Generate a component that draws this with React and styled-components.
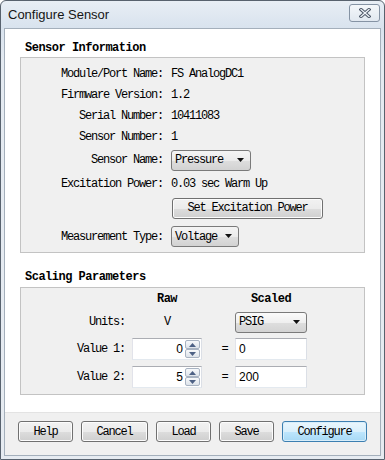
import React from 'react'
import styled, { createGlobalStyle } from 'styled-components'

const Global = createGlobalStyle`
  html, body { margin: 0; padding: 0; background: #fff; }
  * { box-sizing: border-box; }
`

const mono = `"Liberation Mono", "DejaVu Sans Mono", monospace`

const Frame = styled.div`
  width: 385px;
  height: 460px;
  border: 1px solid #58626e;
  border-radius: 6px 6px 0 0;
  background: linear-gradient(#e8eef5, #d9e3ee 26px, #e4eaf1 60px, #e6ebf1);
  display: flex;
  flex-direction: column;
  overflow: hidden;
`

const TitleBar = styled.div`
  height: 26px;
  flex: none;
  display: flex;
  align-items: center;
  justify-content: space-between;
  padding: 0 4px 0 7px;
  font-family: "Liberation Sans", Arial, sans-serif;
  font-size: 13px;
  color: #151515;
`

const CloseBtn = styled.div`
  width: 31px;
  height: 18px;
  margin-top: -3px;
  border: 1px solid #8593a4;
  border-radius: 3px;
  background: linear-gradient(#f4f7fa, #e1e8f0);
  display: flex;
  align-items: center;
  justify-content: center;
`

const Client = styled.div`
  flex: 1;
  margin: 1px 3px 3px;
  border: 1px solid #a4afbb;
  background: #fff;
  display: flex;
  flex-direction: column;
`

const Body = styled.div`
  flex: 1;
  padding: 11px 15px 0;
  font-family: ${mono};
  font-size: 12px;
  letter-spacing: -1.2px;
  color: #000;
`

const GroupTitle = styled.div`
  height: 16px;
  line-height: 16px;
  font-weight: bold;
  letter-spacing: -0.5px;
  margin: ${p => p.$top || 0}px 0 ${p => p.$bottom || 1}px 5px;
`

const GroupBox = styled.div`
  border: 1px solid #c3c3c3;
  background: #f0f0f0;
  display: grid;
  grid-template-columns: ${p => p.$cols};
  grid-template-rows: ${p => p.$rows};
  column-gap: ${p => p.$gap || 0}px;
  align-items: center;
  padding-top: ${p => p.$pt || 0}px;
  padding-bottom: ${p => p.$pb || 0}px;
`

const Label = styled.div`
  text-align: right;
  white-space: nowrap;
`

const Value = styled.div`
  white-space: nowrap;
`

const Header = styled.div`
  font-weight: bold;
  letter-spacing: -0.5px;
  text-align: center;
  padding-left: ${p => p.$indent || 0}px;
`

const Centered = styled.div`
  text-align: center;
  padding-left: ${p => p.$indent || 0}px;
`

const Cell = styled.div`
  padding-left: ${p => p.$indent || 0}px;
`

const SelectBox = styled.div`
  width: ${p => p.$w}px;
  height: 21px;
  border: 1px solid #7a7a7a;
  border-radius: 3px;
  background: ${p => p.$light
    ? 'linear-gradient(#fbfbfb, #efefef 50%, #dedede 51%, #d3d3d3)'
    : 'linear-gradient(#f4f4f4, #ebebeb 50%, #dedede 51%, #d2d2d2)'};
  display: flex;
  align-items: center;
  justify-content: space-between;
  padding: 0 5px 0 3px;
`

const Arrow = () => (
  <svg width="8" height="5" viewBox="0 0 8 5">
    <path d="M0 0 H7 L3.5 4 Z" fill="#111" />
  </svg>
)

const Button = styled.div`
  width: ${p => p.$w}px;
  height: 21px;
  margin-left: ${p => p.$indent || 0}px;
  border: 1px solid ${p => (p.$default ? '#3c7fb1' : '#707070')};
  border-radius: 3px;
  background: ${p => p.$default
    ? 'linear-gradient(#eaf6fd, #d9f0fc 50%, #bee6fd 51%, #a7d9f5)'
    : 'linear-gradient(#f2f2f2, #ebebeb 50%, #dddddd 51%, #cfcfcf)'};
  box-shadow: inset 0 0 0 1px ${p => (p.$default ? '#d8eefa' : '#fcfcfc')};
  display: flex;
  align-items: center;
  justify-content: center;
  font-family: ${mono};
  font-size: 12px;
  letter-spacing: -1.2px;
  color: #000;
`

const SpinBox = styled.div`
  width: 70px;
  height: 22px;
  border: 1px solid #abadb3;
  border-color: #abadb3 #dbdfe6 #e3e9ef #e2e3ea;
  background: #fff;
  display: flex;
  align-items: center;
  justify-content: flex-end;
  padding-right: 1px;
  font-family: "Liberation Sans", Arial, sans-serif;
  font-size: 12px;
  letter-spacing: 0;
`

const SpinValue = styled.span`
  margin-right: 2px;
`

const SpinButtons = styled.div`
  width: 15px;
  height: 18px;
  display: flex;
  flex-direction: column;
`

const SpinBtn = styled.div`
  flex: 1;
  border: 1px solid #a8b3c2;
  border-radius: 2px;
  background: linear-gradient(#f7f9fb, #dde3ea);
  display: flex;
  align-items: center;
  justify-content: center;
`

const TextInput = styled.div`
  width: 72px;
  height: 22px;
  border: 1px solid #abadb3;
  border-color: #abadb3 #dbdfe6 #e3e9ef #e2e3ea;
  background: #fff;
  padding-left: 3px;
  display: flex;
  align-items: center;
  font-family: "Liberation Sans", Arial, sans-serif;
  font-size: 12px;
  letter-spacing: 0;
`

const Footer = styled.div`
  height: 43px;
  flex: none;
  background: #f0f0f0;
  border-top: 1px solid #e3e3e3;
  display: flex;
  align-items: flex-start;
  gap: 8px;
  padding: 8px 0 0 13px;
`

const Tri = ({ up }) => (
  <svg width="7" height="4" viewBox="0 0 7 4">
    <path d={up ? 'M0 4 H7 L3.5 0 Z' : 'M0 0 H7 L3.5 4 Z'} fill="#4d6185" />
  </svg>
)

const Spin = ({ value }) => (
  <SpinBox>
    <SpinValue>{value}</SpinValue>
    <SpinButtons>
      <SpinBtn><Tri up /></SpinBtn>
      <SpinBtn><Tri /></SpinBtn>
    </SpinButtons>
  </SpinBox>
)

const info = [
  ['Module/Port Name:', 'FS AnalogDC1'],
  ['Firmware Version:', '1.2'],
  ['Serial Number:', '10411083'],
  ['Sensor Number:', '1'],
]

export default function App() {
  return (
    <>
      <Global />
      <Frame>
        <TitleBar>
          <span>Configure Sensor</span>
          <CloseBtn>
            <svg width="12" height="10" viewBox="0 0 12 10">
              <path d="M2 1.5 L10 8.5 M10 1.5 L2 8.5" stroke="#4b5666" strokeWidth="3.2" strokeLinecap="square" />
              <path d="M2 1.5 L10 8.5 M10 1.5 L2 8.5" stroke="#eef2f7" strokeWidth="1.3" strokeLinecap="square" />
            </svg>
          </CloseBtn>
        </TitleBar>
        <Client>
          <Body>
            <GroupTitle>Sensor Information</GroupTitle>
            <GroupBox
              $cols="142px 1fr"
              $rows="21px 21px 21px 21px 26px 22px 26px 31px"
              $gap={8}
              $pt={5}
            >
              {info.map(([l, v]) => (
                <React.Fragment key={l}>
                  <Label>{l}</Label>
                  <Value>{v}</Value>
                </React.Fragment>
              ))}
              <Label>Sensor Name:</Label>
              <SelectBox $w={80}>Pressure<Arrow /></SelectBox>
              <Label>Excitation Power:</Label>
              <Value>0.03 sec Warm Up</Value>
              <span />
              <Button $w={151} $indent={1}>Set Excitation Power</Button>
              <Label>Measurement Type:</Label>
              <SelectBox $w={68}>Voltage<Arrow /></SelectBox>
            </GroupBox>

            <GroupTitle $top={16} $bottom={2}>Scaling Parameters</GroupTitle>
            <GroupBox
              $cols="104px 77px 33px 72px"
              $rows="22px 24px 30px 26px"
              $pb={4}
            >
              <span />
              <Header $indent={7}>Raw</Header>
              <span />
              <Header>Scaled</Header>

              <Label>Units:</Label>
              <Centered $indent={7}>V</Centered>
              <span />
              <SelectBox $w={72} $light>PSIG<Arrow /></SelectBox>

              <Label>Value 1:</Label>
              <Cell $indent={7}><Spin value="0" /></Cell>
              <Centered $indent={12}>=</Centered>
              <TextInput>0</TextInput>

              <Label>Value 2:</Label>
              <Cell $indent={7}><Spin value="5" /></Cell>
              <Centered $indent={12}>=</Centered>
              <TextInput>200</TextInput>
            </GroupBox>
          </Body>
          <Footer>
            <Button $w={55}>Help</Button>
            <Button $w={67}>Cancel</Button>
            <Button $w={55}>Load</Button>
            <Button $w={55}>Save</Button>
            <Button $w={85} $default>Configure</Button>
          </Footer>
        </Client>
      </Frame>
    </>
  )
}
